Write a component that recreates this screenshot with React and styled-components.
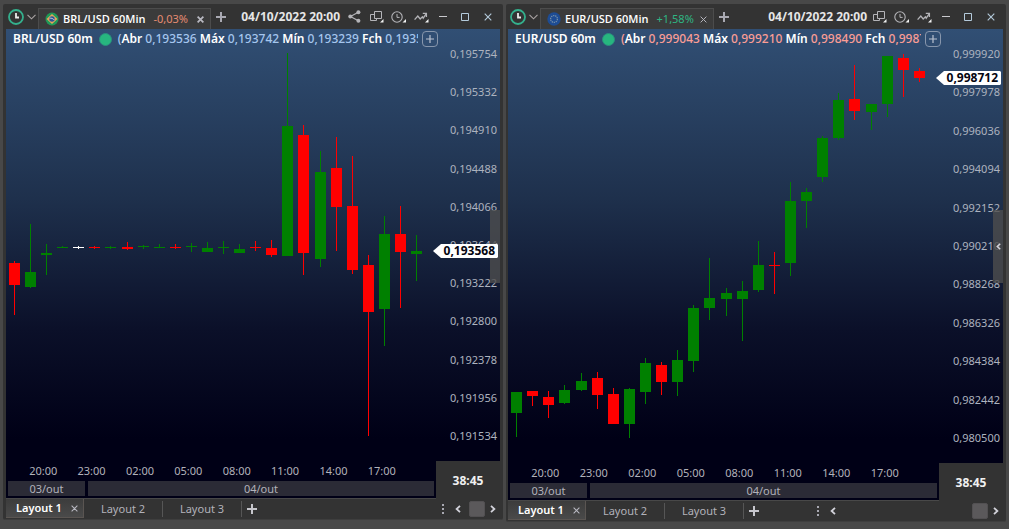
import React from 'react';
import styled, { createGlobalStyle } from 'styled-components';

const GlobalStyle = createGlobalStyle`
  * {
    box-sizing: border-box;
  }
  body {
    margin: 0;
    background: #484848;
    font-family: 'Noto Sans', 'Open Sans', sans-serif;
    font-size: 11px;
    color: #b2b2ba;
  }
  button {
    font: inherit;
    color: inherit;
    background: none;
    border: 0;
    padding: 0;
    margin: 0;
  }
  svg {
    display: block;
    flex: none;
  }
`;

const Workspace = styled.main`
  display: grid;
  grid-template-columns: minmax(0, 1fr) minmax(0, 1fr);
  align-items: start;
  gap: 3px;
  padding: 4px 3px 8px;
`;

const Window = styled.section`
  background: #333333;
  border-bottom: 1px solid #3e3e3e;
  border-radius: 2px;
  padding: 0 3px 1px ${props => props.$inset};
  min-width: 0;
`;

const TitleBar = styled.header`
  display: flex;
  align-items: center;
  height: 25px;
  white-space: nowrap;
`;

const ClockMenu = styled.button`
  display: flex;
  align-items: center;
  gap: 3px;
  padding-left: 2px;
  width: 32px;
`;

const SymbolTab = styled.div`
  display: flex;
  align-items: center;
  align-self: flex-end;
  width: ${props => props.$width};
  height: 21px;
  padding: 0 5px 0 6px;
  border: 1px solid #4c4c4c;
  border-bottom: 0;
  background: #3b3b3b;
`;

const SymbolName = styled.h2`
  margin: 0 8px 0 4px;
  font-family: 'Open Sans', 'Noto Sans', sans-serif;
  font-size: 11px;
  line-height: 16px;
  font-weight: 600;
  color: #ffffff;
`;

const Change = styled.span`
  font-size: 11px;
  line-height: 16px;
  color: ${props => props.$up ? '#2fb583' : '#e58b72'};
`;

const IconButton = styled.button`
  display: flex;
  flex: none;
  align-items: center;
  justify-content: center;
  width: ${props => props.$width || '22px'};
  height: 20px;
`;

const CloseTab = styled(IconButton)`
  width: 10px;
  margin-left: auto;
`;

const Timestamp = styled.time`
  margin-left: auto;
  margin-right: 2px;
  font-size: 12px;
  line-height: 16px;
  font-weight: 700;
  color: #e6e6e6;
`;

const Chart = styled.div`
  display: grid;
  grid-template-columns: minmax(0, 1fr) 64px;
  background: linear-gradient(#314f74 0, #1e304c 170px, #0b1029 300px, #000016 410px);
`;

const Legend = styled.div`
  grid-column: 1 / -1;
  display: flex;
  align-items: center;
  gap: 4px;
  height: 18px;
  padding: 2px 62px 0 7px;
  font-size: 12px;
  line-height: 16px;
`;

const LegendText = styled.div`
  display: flex;
  align-items: center;
  flex: 1;
  min-width: 0;
  overflow: hidden;
  white-space: nowrap;
  color: ${props => props.$color};
  font-weight: 500;
`;

const Strong = styled.b`
  color: #ffffff;
  font-weight: 600;
`;

const Quote = styled.span`
  white-space: pre;
`;

const Dot = styled.span`
  flex: none;
  width: 13px;
  height: 13px;
  margin: 0 6px;
  border-radius: 50%;
  background: #27b67f;
  border: 1px solid #2a8f7e;
`;

const AddIndicator = styled.button`
  display: flex;
  align-items: center;
  justify-content: center;
  width: 16px;
  height: 16px;
  border: 1px solid #8796ac;
  border-radius: 4px;
`;

const Plot = styled.div`
  height: ${props => props.$height};
  overflow: hidden;
`;

const PriceAxis = styled.div`
  position: relative;
  display: flex;
  flex-direction: column;
  align-items: flex-end;
  justify-content: space-between;
  padding: 0 3px 18px 0;
  line-height: 14px;
  color: #adb3bf;
`;

const SideHandle = styled.button`
  position: absolute;
  top: 163px;
  right: 0;
  display: flex;
  align-items: center;
  justify-content: center;
  width: 10px;
  height: 73px;
  background: rgba(78, 78, 78, 0.8);
`;

const PriceTag = styled.output`
  position: absolute;
  top: ${props => props.$top};
  right: 2px;
  width: 65px;
  padding-right: 3px;
  text-align: right;
  font-size: 12px;
  line-height: 14px;
  font-weight: 700;
  color: #050510;
  background: #ffffff;
  clip-path: polygon(0 50%, 8px 0, 64px 0, 65px 1px, 65px 13px, 64px 100%, 8px 100%);
`;

const TimeAxis = styled.div`
  padding: 0 2px 2px;
  border-bottom: 1px solid #484848;
`;

const Hours = styled.div`
  display: grid;
  grid-template-columns: repeat(8, 1fr);
  padding: 0 28px 0 11px;
  text-align: center;
  line-height: 20px;
`;

const Days = styled.div`
  display: grid;
  grid-template-columns: 77px 1fr;
  gap: 3px;
`;

const Day = styled.div`
  height: 15px;
  text-align: center;
  line-height: 15px;
  background: #2b2b36;
`;

const Countdown = styled.div`
  display: flex;
  align-items: center;
  justify-content: center;
  background: #333333;
  color: #f0f0f0;
  font-size: 12px;
  font-weight: 700;
`;

const LayoutBar = styled.nav`
  display: flex;
  align-items: center;
  height: 19px;
`;

const ActiveLayout = styled.div`
  display: flex;
  align-items: center;
  justify-content: space-between;
  width: 78px;
  height: 19px;
  padding: 0 4px 0 10px;
  background: linear-gradient(#3c3c3c, #4a4a4a);
  border: 1px solid #5a5552;
  border-top: 0;
  border-left: 0;
`;

const LayoutButton = styled.button`
  width: ${props => props.$active ? 'auto' : '79px'};
  height: 16px;
  line-height: 16px;
  font-weight: ${props => props.$active ? 600 : 400};
  color: ${props => props.$active ? '#ffffff' : '#b2b2ba'};
  border-right: ${props => props.$divider ? '1px solid #565656' : '0'};
`;

const ScrollArea = styled.div`
  display: flex;
  align-items: center;
  width: ${props => props.$width};
  margin-left: auto;
`;

const Thumb = styled.div`
  width: 16px;
  height: 16px;
  margin-left: auto;
  border-radius: 2px;
  border: 1px solid #525052;
  background: #5b595b;
`;

const COLORS = { g: '#008000', r: '#ff0000', w: '#ffffff' };
const HOURS = ['20:00', '23:00', '02:00', '05:00', '08:00', '11:00', '14:00', '17:00'];

// candles: colour, x, high, low, body top, body bottom
const brl = {
  id: 'brl',
  name: 'BRL/USD',
  change: '-0,03%',
  quotes: [['Abr', '0,193536'], ['Máx', '0,193742'], ['Mín', '0,193239'], ['Fch', '0,193568']],
  color: '#a5c6ee',
  share: true,
  inset: '3px',
  tabWidth: '173px',
  plotHeight: '414px',
  originX: 6,
  tag: '0,193568',
  tagTop: '197px',
  scroll: '63px',
  prices: ['0,195754', '0,195332', '0,194910', '0,194488', '0,194066', '0,193644', '0,193222', '0,192800', '0,192378', '0,191956', '0,191534'],
  candles: [
    ['r', 14, 261, 315, 263, 285], ['g', 30, 224, 288, 272, 287], ['g', 46, 244, 275, 253, 255],
    ['g', 62, 246, 248, 247, 248], ['w', 78, 246, 249, 247, 248], ['r', 94, 246, 249, 247, 248],
    ['g', 110, 246, 249, 247, 248], ['r', 127, 242, 250, 247, 249], ['g', 143, 245, 249, 246, 247],
    ['g', 159, 244, 248, 247, 248], ['r', 175, 244, 249, 247, 248], ['g', 191, 243, 252, 246, 247],
    ['g', 207, 242, 252, 248, 252], ['g', 223, 241, 254, 247, 248], ['g', 239, 244, 253, 249, 253],
    ['r', 255, 241, 251, 247, 248], ['r', 271, 240, 257, 248, 255], ['g', 287, 53, 256, 126, 256],
    ['r', 303, 125, 275, 135, 253], ['g', 320, 151, 267, 172, 259], ['r', 336, 137, 251, 168, 207],
    ['r', 352, 156, 274, 206, 270], ['r', 368, 255, 436, 265, 312], ['g', 384, 216, 346, 234, 309],
    ['r', 400, 206, 308, 234, 252], ['g', 416, 235, 281, 251, 254],
  ],
};

const eur = {
  id: 'eur',
  name: 'EUR/USD',
  change: '+1,58%',
  up: true,
  quotes: [['Abr', '0,999043'], ['Máx', '0,999210'], ['Mín', '0,998490'], ['Fch', '0,998712']],
  color: '#fb9d95',
  inset: '2px',
  tabWidth: '174px',
  plotHeight: '416px',
  originX: 508,
  tag: '0,998712',
  tagTop: '24px',
  scroll: '191px',
  prices: ['0,999920', '0,997978', '0,996036', '0,994094', '0,992152', '0,990210', '0,988268', '0,986326', '0,984384', '0,982442', '0,980500'],
  candles: [
    ['g', 516, 392, 437, 392, 413], ['r', 532, 391, 406, 391, 396], ['r', 548, 391, 418, 397, 405],
    ['g', 564, 385, 404, 390, 403], ['g', 581, 373, 391, 381, 390], ['r', 597, 372, 409, 378, 395],
    ['r', 613, 388, 424, 394, 424], ['g', 629, 388, 438, 389, 424], ['g', 645, 358, 404, 363, 392],
    ['r', 661, 362, 395, 365, 382], ['g', 677, 350, 396, 360, 382], ['g', 693, 305, 372, 308, 361],
    ['g', 709, 258, 320, 298, 308], ['g', 726, 288, 316, 293, 299], ['g', 742, 281, 341, 291, 299],
    ['g', 758, 241, 292, 265, 290], ['r', 774, 252, 294, 265, 266], ['g', 790, 182, 276, 201, 263],
    ['g', 806, 188, 228, 192, 201], ['g', 822, 136, 182, 138, 177], ['g', 838, 93, 140, 100, 138],
    ['r', 854, 65, 120, 99, 111], ['g', 871, 104, 130, 104, 112], ['g', 887, 56, 117, 56, 104],
    ['r', 903, 54, 97, 58, 70], ['r', 919, 68, 82, 71, 78],
  ],
};

const Candles = ({ data, originX }) => (
  <svg width="100%" height="100%" shapeRendering="crispEdges" role="img" aria-label="Candles">
    <g transform={`translate(${-originX} -47)`}>
      {data.map(([c, x, high, low, top, bottom]) => (
        <g key={x} fill={COLORS[c]}>
          <rect x={x} y={high} width="1" height={low - high} />
          <rect x={x - 5} y={top} width="11" height={bottom - top} />
        </g>
      ))}
    </g>
  </svg>
);

const Cross = ({ size = 7, color = '#b9b9c2', width = 1.5 }) => (
  <svg width={size} height={size} viewBox="0 0 8 8" fill="none" stroke={color} strokeWidth={width}>
    <path d="M.7.7l6.6 6.6M7.3.7L.7 7.3" />
  </svg>
);

const Plus = ({ size = 10, color = '#a9a9b2', width = 2 }) => (
  <svg width={size} height={size} viewBox="0 0 10 10" fill="none" stroke={color} strokeWidth={width}>
    <path d="M5 0v10M0 5h10" />
  </svg>
);

const Arrow = ({ flip, color = '#d2d2da', size = 8 }) => (
  <svg width={size} height={size} viewBox="0 0 8 8" fill="none" stroke={color} strokeWidth="1.8">
    <path d={flip ? 'M2 .8L5.4 4 2 7.2' : 'M6 .8L2.6 4 6 7.2'} />
  </svg>
);

const SessionIcon = () => (
  <svg width="16" height="16" viewBox="0 0 16 16" fill="none">
    <circle cx="8" cy="8" r="7" stroke="#34b08d" strokeWidth="1.8" />
    <path d="M8 4v4.5h3" stroke="#ececec" strokeWidth="1.8" />
  </svg>
);

const Flag = ({ id }) => id === 'brl' ? (
  <svg width="14" height="14" viewBox="0 0 14 14">
    <circle cx="7" cy="7" r="6.5" fill="#1f9a58" />
    <path d="M7 2l5.5 5L7 12 1.5 7z" fill="#e8a45a" />
    <circle cx="7" cy="7" r="2.7" fill="#2b5596" />
    <path d="M4.6 6.2c1.8-.2 3.6.3 4.7 1.8" stroke="#dce6ee" strokeWidth=".8" fill="none" />
  </svg>
) : (
  <svg width="14" height="14" viewBox="0 0 14 14">
    <circle cx="7" cy="7" r="6.7" fill="#1d4c94" />
    <circle cx="7" cy="7" r="3.4" fill="none" stroke="#7c93a8" strokeWidth="1.2" strokeDasharray="1.3 .8" />
  </svg>
);

const ShareIcon = () => (
  <svg width="13" height="13" viewBox="0 0 13 13" fill="#b4b4b8">
    <path d="M10.3 2.3L2.5 6.5l7.8 4.2" fill="none" stroke="#b4b4b8" strokeWidth="1.2" />
    <circle cx="10.4" cy="2.3" r="2" />
    <circle cx="2.3" cy="6.5" r="2" />
    <circle cx="10.4" cy="10.7" r="2" />
  </svg>
);

const WindowsIcon = () => (
  <svg width="14" height="12" viewBox="0 0 14 12" fill="none" stroke="#b4b4b8">
    <path d="M4.5.5h7v7h-7zM4.5 3.5h-4v6h6v-2" />
    <path d="M13.5 8v3.5H10z" fill="#f2f2f2" stroke="none" />
  </svg>
);

const HistoryIcon = () => (
  <svg width="16" height="12" viewBox="0 0 16 12" fill="none" stroke="#b4b4b8">
    <circle cx="6" cy="6" r="5.2" strokeWidth="1.1" />
    <path d="M6 3v3.4h2.6" />
    <path d="M15 8v3.5h-3.5z" fill="#f2f2f2" stroke="none" />
  </svg>
);

const TrendIcon = () => (
  <svg width="15" height="12" viewBox="0 0 15 12" fill="none" stroke="#b4b4b8" strokeWidth="1.3">
    <path d="M.6 8.6L3.8 5l2.4 3L8.4 5.8l.8 1.4 2.8-4" />
    <path d="M8.8 2.4h3.6V6" />
    <path d="M14.5 8v3.5H11z" fill="#f2f2f2" stroke="none" />
  </svg>
);

const ChartWindow = ({ chart }) => (
  <Window $inset={chart.inset}>
    <TitleBar>
      <ClockMenu aria-label="Session">
        <SessionIcon />
        <svg width="9" height="6" viewBox="0 0 9 6" fill="none" stroke="#aaa4a4" strokeWidth="1.1">
          <path d="M.5.8l4 4 4-4" />
        </svg>
      </ClockMenu>
      <SymbolTab $width={chart.tabWidth}>
        <Flag id={chart.id} />
        <SymbolName>{chart.name} 60Min</SymbolName>
        <Change $up={chart.up}>{chart.change}</Change>
        <CloseTab aria-label="Close chart"><Cross width={chart.up ? 1.1 : 2} /></CloseTab>
      </SymbolTab>
      <IconButton $width="20px" aria-label="New chart"><Plus /></IconButton>
      <Timestamp>04/10/2022 20:00</Timestamp>
      {chart.share && <IconButton $width="24px" aria-label="Share"><ShareIcon /></IconButton>}
      <IconButton aria-label="Windows"><WindowsIcon /></IconButton>
      <IconButton aria-label="History"><HistoryIcon /></IconButton>
      <IconButton aria-label="Indicators"><TrendIcon /></IconButton>
      <IconButton aria-label="Minimize">
        <svg width="8" height="1"><path d="M0 .5h8" stroke="#c9c9cd" /></svg>
      </IconButton>
      <IconButton aria-label="Maximize">
        <svg width="8" height="8"><path d="M.5.5h7v7h-7z" fill="none" stroke="#b4cadb" /></svg>
      </IconButton>
      <IconButton $width="24px" aria-label="Close"><Cross size={8} color="#b4cadb" width={1.1} /></IconButton>
    </TitleBar>

    <Chart>
      <Legend>
        <LegendText $color={chart.color}>
          <Strong>{chart.name} 60m</Strong>
          <Dot />
          <Quote>
            (
            {chart.quotes.map(([label, value], i) => (
              <React.Fragment key={label}>
                {i > 0 && ' '}<Strong>{label}</Strong> {value}
              </React.Fragment>
            ))}
          </Quote>
        </LegendText>
        <AddIndicator aria-label="Add indicator"><Plus size={8} color="#b9c2d0" width={1.5} /></AddIndicator>
      </Legend>
      <Plot $height={chart.plotHeight}>
        <Candles data={chart.candles} originX={chart.originX} />
      </Plot>
      <PriceAxis>
        {chart.prices.map(price => <span key={price}>{price}</span>)}
        <SideHandle aria-label="Open panel"><Arrow size={7} /></SideHandle>
        <PriceTag $top={chart.tagTop}>{chart.tag}</PriceTag>
      </PriceAxis>
      <TimeAxis>
        <Hours>
          {HOURS.map(hour => <span key={hour}>{hour}</span>)}
        </Hours>
        <Days>
          <Day>03/out</Day>
          <Day>04/out</Day>
        </Days>
      </TimeAxis>
      <Countdown>38:45</Countdown>
    </Chart>

    <LayoutBar>
      <ActiveLayout>
        <LayoutButton $active>Layout 1</LayoutButton>
        <IconButton $width="10px" aria-label="Close layout"><Cross width={1.2} /></IconButton>
      </ActiveLayout>
      <LayoutButton $divider>Layout 2</LayoutButton>
      <LayoutButton $divider>Layout 3</LayoutButton>
      <IconButton $width="20px" aria-label="New layout"><Plus color="#c6c6cc" /></IconButton>
      <ScrollArea $width={chart.scroll}>
        <IconButton $width="12px" aria-label="More">
          <svg width="2" height="10" fill="#a9a9b2">
            <path d="M0 0h2v2H0zM0 4h2v2H0zM0 8h2v2H0z" />
          </svg>
        </IconButton>
        <IconButton $width="18px" aria-label="Scroll left"><Arrow /></IconButton>
        <Thumb />
        <IconButton $width="15px" aria-label="Scroll right"><Arrow flip /></IconButton>
      </ScrollArea>
    </LayoutBar>
  </Window>
);

const App = () => (
  <>
    <GlobalStyle />
    <Workspace>
      <ChartWindow chart={brl} />
      <ChartWindow chart={eur} />
    </Workspace>
  </>
);

export default App;
